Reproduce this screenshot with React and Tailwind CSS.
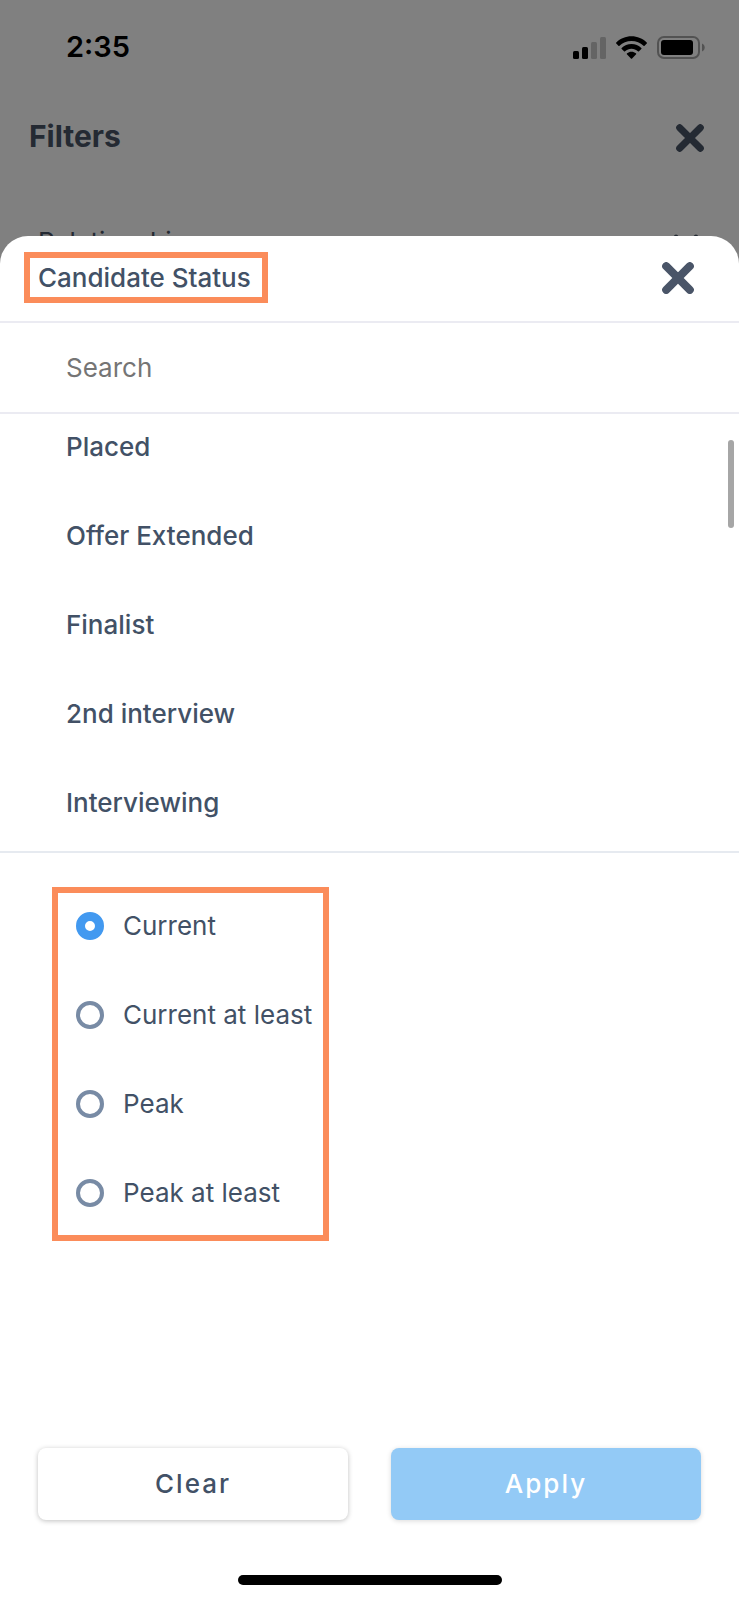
import { useState } from "react";

const statuses = ["Placed", "Offer Extended", "Finalist", "2nd interview", "Interviewing"];

const matchModes = [
  { value: "current", label: "Current" },
  { value: "current-min", label: "Current at least" },
  { value: "peak", label: "Peak" },
  { value: "peak-min", label: "Peak at least" },
];

function CrossIcon({ className }) {
  return (
    <svg viewBox="0 0 32 32" className={className} fill="none" stroke="currentColor" strokeWidth="8" strokeLinecap="round" aria-hidden="true">
      <path d="M4.2 4.2 27.8 27.8M27.8 4.2 4.2 27.8" />
    </svg>
  );
}

function StatusBar() {
  return (
    <div className="flex h-[94px] items-center justify-between pl-[66px] pr-[34px] text-black">
      <span className="text-[29px] leading-8 font-semibold">2:35</span>
      <div className="flex items-center gap-[10px]">
        <svg viewBox="0 0 33 23" className="h-[23px] w-[33px]" aria-hidden="true">
          <rect x="0" y="15" width="6" height="8" rx="1.5" />
          <rect x="9" y="11" width="6" height="12" rx="1.5" />
          <rect x="18" y="6" width="6" height="17" rx="1.5" fill="#646464" />
          <rect x="27" y="1" width="6" height="22" rx="1.5" fill="#646464" />
        </svg>
        <svg viewBox="0 0 31 23" className="h-[23px] w-[31px]" aria-hidden="true">
          <path d="M15.5.3c5.900 0 11.300 2.300 15.200 6.100a.8.8 0 0 1 0 1.200l-2.100 2.100a.8.8 0 0 1-1.100 0C24.400 6.700 20.200 4.900 15.500 4.900S6.600 6.700 3.500 9.700a.8.8 0 0 1-1.100 0L.3 7.600a.8.8 0 0 1 0-1.200C4.200 2.600 9.600.3 15.500.3z" />
          <path d="M15.500 8.100c3.800 0 7.200 1.400 9.800 3.800a.8.8 0 0 1 0 1.200l-2.300 2.200a.8.8 0 0 1-1.100 0c-1.700-1.600-4-2.500-6.400-2.500s-4.700.9-6.400 2.500a.8.8 0 0 1-1.100 0l-2.300-2.200a.8.8 0 0 1 0-1.200c2.600-2.400 6-3.800 9.800-3.800z" />
          <path d="M15.500 15.700c1.700 0 3.200.6 4.400 1.600a.8.8 0 0 1 0 1.200l-3.800 3.900a.8.8 0 0 1-1.200 0l-3.800-3.900a.8.8 0 0 1 0-1.200c1.200-1 2.700-1.600 4.400-1.600z" />
        </svg>
        <svg viewBox="0 0 48 23" className="h-[23px] w-[48px]" aria-hidden="true">
          <rect x="1" y="1" width="41" height="21" rx="6" fill="none" stroke="#525252" strokeWidth="2" />
          <rect x="4" y="4" width="32" height="15" rx="3" />
          <path d="M45 7.500c1.700.7 2.700 2.200 2.700 4s-1 3.300-2.700 4z" fill="#525252" />
        </svg>
      </div>
    </div>
  );
}

export default function App() {
  const [search, setSearch] = useState("");
  const [mode, setMode] = useState("current");

  return (
    <div className="flex min-h-screen flex-col bg-[#808080] font-['Inter',sans-serif] text-[26px] leading-8 text-[#425166]">
      <StatusBar />

      {/* dimmed page behind the sheet */}
      <div className="flex h-[84px] items-center justify-between pl-[29px] pr-[35px] text-[#242a33]">
        <h1 className="text-3xl leading-8 font-bold">Filters</h1>
        <button type="button" aria-label="Close filters" className="mt-1">
          <CrossIcon className="size-7" />
        </button>
      </div>
      <div className="flex h-[58px] items-start justify-between overflow-hidden pl-[38px] pr-[41px] pt-12 text-[#242a33]">
        <span>Relationship</span>
        <svg viewBox="0 0 24 24" className="mt-2 h-6 w-6" fill="none" stroke="currentColor" strokeWidth="4" strokeLinecap="round" aria-hidden="true">
          <path d="M2 2.500 12 13l10-10.500" />
        </svg>
      </div>

      <section role="dialog" aria-labelledby="sheet-title" className="flex flex-1 flex-col rounded-t-[28px] bg-white">
        <header className="flex items-start justify-between border-b-2 border-[#ebebf2] pt-4 pb-[18px] pl-6 pr-[45px]">
          <h2 id="sheet-title" className="border-6 border-[#fb8c5a] pt-1 pr-[11px] pb-[3px] pl-2 font-medium">
            Candidate Status
          </h2>
          <button type="button" aria-label="Close" className="mt-[10px] text-[#4a5568]">
            <CrossIcon className="size-8" />
          </button>
        </header>

        <div className="border-b-2 border-[#ebebf2] px-[66px] pt-[29px] pb-7">
          <input
            type="text"
            aria-label="Search"
            placeholder="Search"
            value={search}
            onChange={(e) => setSearch(e.target.value)}
            className="block h-8 w-full bg-transparent outline-none placeholder:text-[#757575]"
          />
        </div>

        <div className="relative border-b-2 border-[#e6eaf0]">
          <ul className="flex flex-col gap-[57px] px-[66px] pt-[17px] pb-8 font-medium">
            {statuses.map((status) => (
              <li key={status}>{status}</li>
            ))}
          </ul>
          <div className="absolute top-[26px] right-[5px] h-[88px] w-[6px] rounded-full bg-[#a6a6a6]" />
        </div>

        <fieldset className="mt-[34px] ml-[52px] flex w-[277px] flex-col gap-[57px] border-6 border-[#fb8c5a] pt-[17px] pb-[26px] pl-[18px]">
          {matchModes.map((m) => (
            <label key={m.value} className="flex items-center gap-[19px] whitespace-nowrap">
              <input
                type="radio"
                name="mode"
                value={m.value}
                checked={mode === m.value}
                onChange={() => setMode(m.value)}
                className="size-7 shrink-0 appearance-none rounded-full border-4 border-[#788ba5] checked:border-9 checked:border-[#4299f0]"
              />
              {m.label}
            </label>
          ))}
        </fieldset>

        <div className="mt-auto flex gap-[43px] px-[38px] pt-10 font-medium tracking-[2px]">
          <button type="button" className="h-[72px] flex-1 rounded-lg bg-white shadow-[0_1px_5px_rgba(0,0,0,0.25)]">
            Clear
          </button>
          <button type="button" className="h-[72px] flex-1 rounded-lg bg-[#93caf6] text-white shadow-[0_1px_5px_rgba(0,0,0,0.15)]">
            Apply
          </button>
        </div>
        <div className="mx-auto mt-[55px] mb-[15px] h-[10px] w-[264px] rounded-full bg-black" />
      </section>
    </div>
  );
}
